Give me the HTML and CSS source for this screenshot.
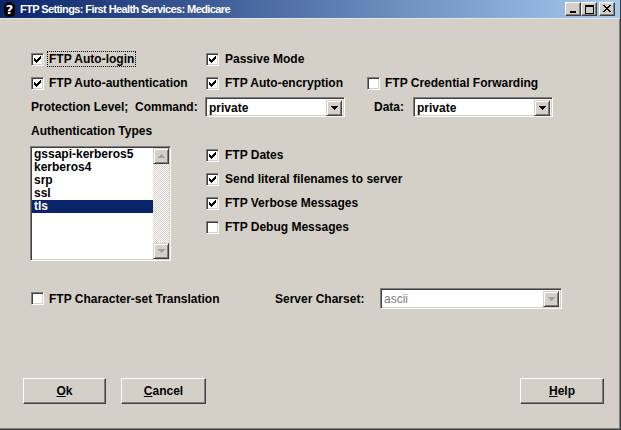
FILE: index.html
```html
<!DOCTYPE html>
<html>
<head>
<meta charset="utf-8">
<link rel="stylesheet" href="styles.css">
</head>
<body>
<div class="window">
  <div class="titlebar">
    <span class="title-icon">?</span>
    <span class="title-text">FTP Settings: First Health Services: Medicare</span>
    <span class="title-buttons">
      <span class="tbtn"><svg width="6" height="2" viewBox="0 0 6 2"><rect width="6" height="2" fill="#000"/></svg></span>
      <span class="tbtn"><svg width="9" height="9" viewBox="0 0 9 9"><path d="M0 0h9v9h-9z M1 2v6h7v-6z" fill="#000" fill-rule="evenodd"/></svg></span>
      <span class="tbtn close"><svg width="8" height="7" viewBox="0 0 8 7"><path d="M0 0h2v1h-2z M6 0h2v1h-2z M1 1h2v1h-2z M5 1h2v1h-2z M2 2h4v1h-4z M3 3h2v1h-2z M2 4h4v1h-4z M1 5h2v1h-2z M5 5h2v1h-2z M0 6h2v1h-2z M6 6h2v1h-2z" fill="#000"/></svg></span>
    </span>
  </div>
  <div class="client">
    <div class="top-grid">
      <div class="cell"><span class="cb checked"></span><span class="lbl focus">FTP Auto-login</span></div>
      <div class="cell"><span class="cb checked"></span><span class="lbl">Passive Mode</span></div>
      <div class="cell"></div>

      <div class="cell"><span class="cb checked"></span><span class="lbl">FTP Auto-authentication</span></div>
      <div class="cell"><span class="cb checked"></span><span class="lbl">FTP Auto-encryption</span></div>
      <div class="cell c3"><span class="cb"></span><span class="lbl">FTP Credential Forwarding</span></div>

      <div class="cell"><span class="lbl plain">Protection Level;&nbsp; Command:</span></div>
      <div class="cell"><span class="combo cmd"><span class="combo-text">private</span><span class="combo-btn"><svg width="7" height="4" viewBox="0 0 7 4"><path d="M0 0h7v1h-7z M1 1h5v1h-5z M2 2h3v1h-3z M3 3h1v1h-1z" fill="#000"/></svg></span></span></div>
      <div class="cell c3"><span class="lbl plain data-lbl">Data:</span><span class="combo data"><span class="combo-text">private</span><span class="combo-btn"><svg width="7" height="4" viewBox="0 0 7 4"><path d="M0 0h7v1h-7z M1 1h5v1h-5z M2 2h3v1h-3z M3 3h1v1h-1z" fill="#000"/></svg></span></span></div>

      <div class="cell"><span class="lbl plain">Authentication Types</span></div>
      <div class="cell"></div>
      <div class="cell"></div>
    </div>

    <div class="mid">
      <div class="listbox">
        <div class="items">
          <div class="item">gssapi-kerberos5</div>
          <div class="item">kerberos4</div>
          <div class="item">srp</div>
          <div class="item">ssl</div>
          <div class="item sel">tls</div>
        </div>
        <div class="vscroll">
          <span class="sbtn"><svg width="7" height="4" viewBox="0 0 7 4"><path d="M3 0h1v1h-1z M2 1h3v1h-3z M1 2h5v1h-5z M0 3h7v1h-7z" fill="#a0a0a0"/></svg></span>
          <span class="track"></span>
          <span class="sbtn"><svg width="7" height="4" viewBox="0 0 7 4"><path d="M0 0h7v1h-7z M1 1h5v1h-5z M2 2h3v1h-3z M3 3h1v1h-1z" fill="#a0a0a0"/></svg></span>
        </div>
      </div>
      <div class="right-checks">
        <div class="cell"><span class="cb checked"></span><span class="lbl">FTP Dates</span></div>
        <div class="cell"><span class="cb checked"></span><span class="lbl">Send literal filenames to server</span></div>
        <div class="cell"><span class="cb checked"></span><span class="lbl">FTP Verbose Messages</span></div>
        <div class="cell"><span class="cb"></span><span class="lbl">FTP Debug Messages</span></div>
      </div>
    </div>

    <div class="charset-row">
      <div class="cell cs-check"><span class="cb"></span><span class="lbl">FTP Character-set Translation</span></div>
      <span class="lbl plain cs-lbl">Server Charset:</span>
      <span class="combo charset disabled"><span class="combo-text">ascii</span><span class="combo-btn"><svg width="7" height="4" viewBox="0 0 7 4"><path d="M0 0h7v1h-7z M1 1h5v1h-5z M2 2h3v1h-3z M3 3h1v1h-1z" fill="#a0a0a0"/></svg></span></span>
    </div>

    <div class="buttons">
      <span class="btn"><u>O</u>k</span>
      <span class="btn cancel"><u>C</u>ancel</span>
      <span class="spacer"></span>
      <span class="btn help"><u>H</u>elp</span>
    </div>
  </div>
</div>
</body>
</html>
```

FILE: styles.css
```css
* { box-sizing: border-box; }
html, body { margin: 0; padding: 0; background: #d4d0c8; }
body {
  font-family: "Liberation Sans", Arial, sans-serif;
  font-weight: bold;
  font-size: 12px;
  color: #000;
}
.window {
  width: 621px;
  height: 430px;
  background: #d4d0c8;
  border-right: 1px solid #404040;
  border-bottom: 1px solid #404040;
  box-shadow: inset -1px -1px 0 #808080;
  display: flex;
  flex-direction: column;
  overflow: hidden;
}
.titlebar {
  height: 19px;
  background: linear-gradient(to right, #0a246a, #a6caf0);
  display: flex;
  align-items: center;
  padding-left: 4px;
  padding-right: 5px;
  color: #fff;
  border-bottom: 1px solid #e8e6e0;
}
.title-icon {
  width: 11px;
  height: 15px;
  background: #000;
  border-radius: 5px;
  color: #fff;
  font-size: 13px;
  line-height: 15px;
  text-align: center;
  font-family: "DejaVu Sans", sans-serif;
  font-weight: bold;
}
.title-text {
  margin-left: 5px;
  font-family: "Liberation Sans", Arial, sans-serif;
  font-size: 11px;
  font-weight: bold;
  flex: 1;
  letter-spacing: -0.6px;
}
.title-buttons { display: flex; align-items: center; }
.tbtn {
  width: 16px;
  height: 14px;
  background: #d4d0c8;
  border-top: 1px solid #fff;
  border-left: 1px solid #fff;
  border-right: 1px solid #404040;
  border-bottom: 1px solid #404040;
  box-shadow: inset -1px -1px 0 #808080;
  display: flex;
  align-items: flex-end;
  justify-content: center;
  padding-bottom: 2px;
}
.tbtn:nth-child(2) { align-items: center; padding-bottom: 0; padding-top: 0; }
.tbtn.close { margin-left: 2px; align-items: center; padding-bottom: 1px; }

.client {
  flex: 1;
  padding-top: 28px;
  padding-left: 31px;
}
.top-grid {
  display: grid;
  grid-template-columns: 175px 161px 1fr;
  grid-auto-rows: 24px;
}
.cell {
  display: flex;
  align-items: center;
  height: 24px;
}
.cb {
  width: 13px;
  height: 13px;
  flex: none;
  background: #fff;
  border-top: 1px solid #808080;
  border-left: 1px solid #808080;
  border-right: 1px solid #fff;
  border-bottom: 1px solid #fff;
  box-shadow: inset 1px 1px 0 #404040, inset -1px -1px 0 #d4d0c8;
  position: relative;
}
.cb.checked::after {
  content: "";
  position: absolute;
  left: 2px;
  top: 2px;
  width: 7px;
  height: 7px;
  background: url("data:image/svg+xml,%3Csvg xmlns='http://www.w3.org/2000/svg' width='7' height='7' viewBox='0 0 7 7'%3E%3Cpath d='M0 2h1v3h-1z M1 3h1v3h-1z M2 4h1v3h-1z M3 3h1v3h-1z M4 2h1v3h-1z M5 1h1v3h-1z M6 0h1v3h-1z' fill='%23000'/%3E%3C/svg%3E") no-repeat;
}
.lbl {
  margin-left: 5px;
  white-space: nowrap;
  line-height: 14px;
}
.lbl.plain { margin-left: 0; }
.lbl.focus {
  margin-left: 3px;
  padding: 0 1px;
  border: 1px dotted #000;
}
.top-grid .cell:nth-child(3n+2) .lbl { margin-left: 6px; }
.top-grid .cell:nth-child(3n+2) .lbl.plain { margin-left: 0; }

.combo {
  height: 20px;
  display: flex;
  align-items: stretch;
  background: #fff;
  border-top: 1px solid #808080;
  border-left: 1px solid #808080;
  border-right: 1px solid #fff;
  border-bottom: 1px solid #fff;
  box-shadow: inset 1px 1px 0 #404040, inset -1px -1px 0 #d4d0c8;
  padding: 2px;
}
.combo-text {
  flex: 1;
  padding-left: 1px;
  line-height: 16px;
}
.combo-btn {
  width: 16px;
  height: 16px;
  background: #d4d0c8;
  border-top: 1px solid #d4d0c8;
  border-left: 1px solid #d4d0c8;
  border-right: 1px solid #404040;
  border-bottom: 1px solid #404040;
  box-shadow: inset 1px 1px 0 #fff, inset -1px -1px 0 #808080;
  display: flex;
  align-items: center;
  justify-content: center;
}
.combo.cmd { width: 140px; margin-left: -1px; }
.lbl.plain.data-lbl { margin-left: 7px; }
.combo.data { width: 140px; margin-left: 9px; }
.combo.disabled .combo-text { color: #808080; font-weight: normal; }

.mid {
  display: flex;
  align-items: flex-start;
  margin-left: -1px;
}
.listbox {
  margin-top: 3px;
  width: 141px;
  height: 115px;
  display: flex;
  background: #fff;
  border-top: 1px solid #808080;
  border-left: 1px solid #808080;
  border-right: 1px solid #fff;
  border-bottom: 1px solid #fff;
  box-shadow: inset 1px 1px 0 #404040, inset -1px -1px 0 #d4d0c8;
  padding: 1px;
}
.items { flex: 1; }
.item {
  height: 13px;
  line-height: 13px;
  padding-left: 2px;
}
.item.sel { background: #0a246a; color: #fff; }
.vscroll {
  width: 16px;
  display: flex;
  flex-direction: column;
}
.sbtn {
  width: 16px;
  height: 16px;
  flex: none;
  background: #d4d0c8;
  border-top: 1px solid #d4d0c8;
  border-left: 1px solid #d4d0c8;
  border-right: 1px solid #404040;
  border-bottom: 1px solid #404040;
  box-shadow: inset 1px 1px 0 #fff, inset -1px -1px 0 #808080;
  display: flex;
  align-items: center;
  justify-content: center;
}
.track {
  flex: 1;
  background-color: #fff;
  background-image: repeating-conic-gradient(#d4d0c8 0 25%, #fff 0 50%);
  background-size: 2px 2px;
}
.right-checks {
  margin-left: 35px;
  display: flex;
  flex-direction: column;
}
.right-checks .lbl { margin-left: 6px; }

.charset-row {
  margin-top: 27px;
  display: flex;
  align-items: center;
  height: 21px;
}
.cs-check { width: 244px; }
.cs-lbl { width: 105px; }
.combo.charset { width: 182px; height: 21px; }

.buttons {
  margin-top: 69px;
  margin-left: -8px;
  display: flex;
  width: 581px;
}
.btn {
  width: 83px;
  height: 26px;
  display: flex;
  align-items: center;
  justify-content: center;
  background: #d4d0c8;
  border-top: 1px solid #fff;
  border-left: 1px solid #fff;
  border-right: 1px solid #404040;
  border-bottom: 1px solid #404040;
  box-shadow: inset -1px -1px 0 #808080;
}
.btn.cancel { margin-left: 15px; width: 85px; }
.btn.help { width: 84px; }
.spacer { flex: 1; }
```
